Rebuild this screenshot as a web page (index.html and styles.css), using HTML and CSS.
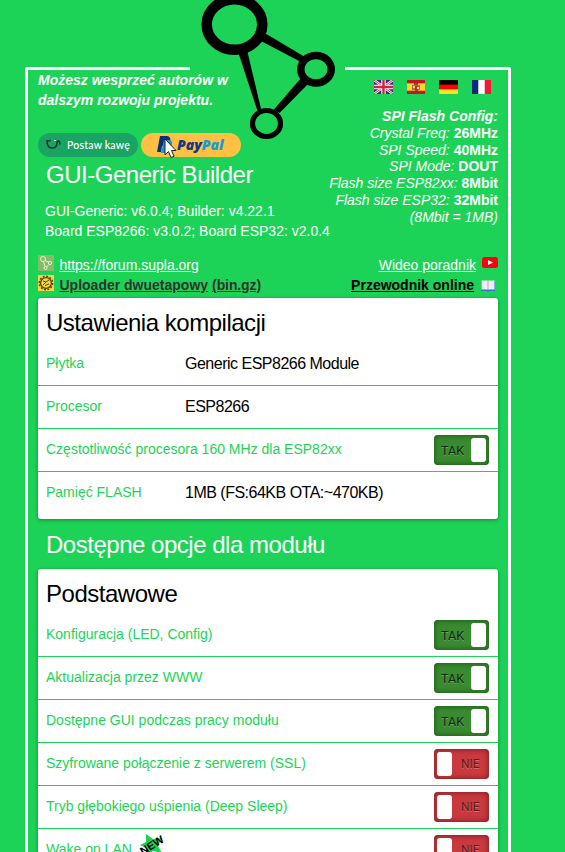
FILE: index.html
```html
<!DOCTYPE html>
<html lang="pl">
<head>
<meta charset="utf-8">
<title>GUI-Generic Builder</title>
<link rel="stylesheet" href="styles.css">
</head>
<body>
<main class="frame">
  <svg class="logo" viewBox="190 0 155 150" width="155" height="150">
    <rect class="logo-gap" x="190" y="60" width="155" height="14"/>
    <path d="M237.500 50 L247 50 L261.500 111 L257.500 111 Z"/>
    <path d="M261 41 L265.500 33.500 L305 57 L299 61 Z"/>
    <path d="M301 78 L308 84 L279.500 113 L273.500 110 Z"/>
    <ellipse cx="234.500" cy="24.500" rx="27.800" ry="25.300" class="ring ring-l"/>
    <ellipse cx="316" cy="69.300" rx="15.200" ry="13.800" class="ring ring-m"/>
    <ellipse cx="266.500" cy="123.500" rx="14" ry="13" class="ring ring-s"/>
  </svg>
  <header class="head">
    <div class="intro">
      <p class="support">Możesz wesprzeć autorów w<br>dalszym rozwoju projektu.</p>
      <div class="donate">
        <span class="pill coffee">
          <svg width="16" height="12" viewBox="0 0 16 12"><path d="M4 1.800 H1 C1 7 3 9 6 9 S11 7 11 4 C11.500 1 14 1.500 13.800 5" fill="none" stroke="#17382c" stroke-width="1.600" stroke-linecap="round"/><path d="M8 1.500h2" stroke="#fff"/></svg>
          <span>Postaw kawę</span>
        </span>
        <span class="pill paypal">
          <svg width="17" height="18" viewBox="0 0 17 18"><path d="M3 0 H10 C15 0 15 10 8 10 H5 L4 16 H0 Z" fill="#0b2f78"/><path d="M7 4 H13 C17 5 15 12 10 12 L8 17 H4 Z" fill="#1698d8"/></svg>
          <span class="pp"><b>Pay</b><i>Pal</i></span>
          <svg class="cursor" width="13" height="21" viewBox="0 0 13 21"><path d="M1 1 V17 L4.500 13.500 L7 19.500 L10 18.300 L7.500 12.500 H12 Z" fill="#fff" stroke="#222"/></svg>
        </span>
      </div>
      <h1>GUI-Generic Builder</h1>
      <p class="versions">GUI-Generic: v6.0.4; Builder: v4.22.1<br>Board ESP8266: v3.0.2; Board ESP32: v2.0.4</p>
    </div>
    <div class="side">
      <div class="flags">
        <svg width="19" height="14" viewBox="0 0 19 14"><path fill="#26337f" d="M0 0h19v14H0z"/><path d="M0 0L19 14M19 0L0 14" stroke="#fff" stroke-width="2.400"/><path d="M0 0L19 14M19 0L0 14" stroke="#d4213d" stroke-width="1"/><path d="M9.500 0V14M0 7H19" stroke="#fff" stroke-width="4.400"/><path d="M9.500 0V14M0 7H19" stroke="#d4213d" stroke-width="2.400"/></svg>
        <svg width="18" height="14" viewBox="0 0 18 14"><path fill="#c8141e" d="M0 0h18v14H0z"/><path fill="#ffd52b" d="M0 3.300h18v7.400H0z"/><path fill="#b96a50" d="M5 5h8v5H5z"/><path fill="#a63a2c" d="M7 3h4v2H7zM8 6h3v5H8z"/><path fill="#ddd0b4" d="M6 6h2v2H6zM10 7h2v2h-2z"/></svg>
        <svg width="19" height="14" viewBox="0 0 19 14"><path d="M0 0h19v5H0z"/><path fill="#f00" d="M0 4.600h19v5H0z"/><path fill="#ffdf20" d="M0 9.400h19v4.600H0z"/></svg>
        <svg width="19" height="14" viewBox="0 0 19 14"><path fill="#fff" d="M0 0h19v14H0z"/><path fill="#092b7c" d="M0 0h6.300v14H0z"/><path fill="#f31835" d="M12.700 0H19v14h-6.300z"/></svg>
      </div>
      <div class="spi">
        <b>SPI Flash Config:</b><br>
        Crystal Freq: <strong>26MHz</strong><br>
        SPI Speed: <strong>40MHz</strong><br>
        SPI Mode: <strong>DOUT</strong><br>
        Flash size ESP82xx: <strong>8Mbit</strong><br>
        Flash size ESP32: <strong>32Mbit</strong><br>
        (8Mbit = 1MB)
      </div>
    </div>
  </header>
  <nav class="links">
    <div class="line">
      <svg width="16" height="16" viewBox="0 0 16 16"><path fill="#83bd67" d="M0 0h16v16H0z"/><g fill="none" stroke="#e2f3da"><circle cx="5" cy="4" r="2.500"/><circle cx="12" cy="8" r="1.600"/><circle cx="7.500" cy="13" r="1.500"/><path d="M7 5.500l4 2M5.500 6.500l1.500 5M11 9.500l-2.500 2.500"/></g></svg>
      <a class="forum">https://forum.supla.org</a>
      <a class="right">Wideo poradnik</a>
      <svg class="yt" width="16" height="11" viewBox="0 0 16 11"><rect width="16" height="11" rx="2.500" fill="#f01"/><path d="M6 3l5 2.500L6 8z" fill="#fff"/></svg>
    </div>
    <div class="line">
      <svg width="16" height="16" viewBox="0 0 16 16"><path fill="#fcd63a" d="M0 0h16v16H0z"/><g fill="none" stroke="#514414"><circle cx="8" cy="8" r="6.700" stroke-width="1.400" stroke-dasharray="2 1.500"/><circle cx="8" cy="8" r="5.400" stroke-width="1.300"/><path d="M5 6l3 1 3-2M5 10l3-3M7 10.500l4-1.500"/></g></svg>
      <a class="uploader">Uploader dwuetapowy</a><a class="bin">(bin.gz)</a>
      <a class="right guide">Przewodnik online</a>
      <svg class="book" width="14" height="12" viewBox="0 0 14 12"><path fill="#2878cc" d="M0 2h14v9H8l-1 1-1-1H0z"/><path fill="#f3edf7" d="M.500 .500h6l.500.500.500-.500h6v9H.500z"/><path stroke="#b7abc6" d="M7 1v9"/></svg>
    </div>
  </nav>
  <section class="card settings">
    <h2>Ustawienia kompilacji</h2>
    <div class="row"><span class="label">Płytka</span><span class="value">Generic ESP8266 Module</span></div>
    <div class="row"><span class="label">Procesor</span><span class="value">ESP8266</span></div>
    <div class="row"><span class="label wide">Częstotliwość procesora 160 MHz dla ESP82xx</span><span class="toggle on">TAK</span></div>
    <div class="row"><span class="label">Pamięć FLASH</span><span class="value">1MB (FS:64KB OTA:~470KB)</span></div>
  </section>
  <h2 class="options">Dostępne opcje dla modułu</h2>
  <section class="card">
    <h2>Podstawowe</h2>
    <div class="row"><span class="label wide">Konfiguracja (LED, Config)</span><span class="toggle on">TAK</span></div>
    <div class="row"><span class="label wide">Aktualizacja przez WWW</span><span class="toggle on">TAK</span></div>
    <div class="row"><span class="label wide">Dostępne GUI podczas pracy modułu</span><span class="toggle on">TAK</span></div>
    <div class="row"><span class="label wide">Szyfrowane połączenie z serwerem (SSL)</span><span class="toggle">NIE</span></div>
    <div class="row"><span class="label wide">Tryb głębokiego uśpienia (Deep Sleep)</span><span class="toggle">NIE</span></div>
    <div class="row"><span class="label wide">Wake on LAN</span>
      <span class="new"><svg width="26" height="24" viewBox="0 0 26 24"><path fill="#1dd357" d="M7 0l7 5 9-1-4 8 4 7-9-2-7 6V14L1 11l6-3z"/></svg><b>NEW</b></span>
      <span class="toggle">NIE</span></div>
  </section>
</main>
</body>
</html>
```
FILE: styles.css
```css
* { box-sizing: border-box; }
html, body { height: 100%; overflow: hidden; }
body {
  margin: 0;
  background: #1dd357;
  font: 14px/20px "Liberation Sans", Arial, sans-serif;
  color: #fff;
}
h1, h2, p { margin: 0; font-weight: 400; }
h1, h2 { font-size: 24px; line-height: 30px; letter-spacing: -.48px; }
svg { display: block; flex: none; }
.frame {
  position: relative;
  width: 486px;
  height: 785px;
  margin: 67px 0 0 25px;
  border: 3px solid #fff;
  border-bottom: 0;
  border-radius: 3px 3px 0 0;
  padding: 0 10px;
}
.logo { position: absolute; left: 162px; top: -70px; }
.logo-gap { fill: #1dd357; }
.ring { fill: #1dd357; stroke: #000; }
.ring-l { stroke-width: 10.500px; }
.ring-m { stroke-width: 7.500px; }
.ring-s { stroke-width: 5.200px; }
.head { display: flex; justify-content: space-between; height: 184px; }
.intro { width: 300px; white-space: nowrap; position: relative; }
.support { font-weight: bold; font-style: italic; }
.donate { display: flex; gap: 3px; margin-top: 23px; }
.pill {
  position: relative;
  display: flex;
  align-items: center;
  width: 100px;
  height: 24px;
  border-radius: 12px;
}
.coffee { background: #19a463; padding-left: 8px; gap: 5px; font: 500 10.500px/24px Lato, sans-serif; letter-spacing: .2px; }
.paypal { background: #ffc043; padding-left: 16px; gap: 3px; }
.pp { font: italic 800 14px/24px "Open Sans", sans-serif; color: #113984; }
.pp b { font-weight: 800; }
.pp i { color: #179bd7; }
.cursor { position: absolute; left: 23px; top: 5px; }
h1 { margin: 3px 0 0 8px; }
.versions { margin: 11px 0 0 7px; }
.side { width: 180px; margin-left: -20px; }
.flags { display: flex; justify-content: flex-end; gap: 14px; padding: 10px 7px 0 0; height: 38px; }
.spi { text-align: right; white-space: nowrap; font-style: italic; line-height: 16.800px; }
.spi strong { font-style: normal; }
.links { height: 44px; }
.line { display: flex; height: 20px; align-items: flex-start; padding-top: 1px; }
.line a { text-decoration: underline; margin-left: 5.500px; }
.line .bin { margin-left: 4px; letter-spacing: -.1px; }
.line .right { margin-left: auto; }
.uploader, .bin { color: #2f342f; font-weight: bold; }
.guide { color: #000; font-weight: bold; }
.yt { margin: 2px 0 0 6px; }
.book { margin: 5px 3px 0 7px; }
.card {
  background: #fff;
  border-radius: 3px;
  box-shadow: 0 1px 4px rgba(0, 0, 0, .35);
  padding-top: 10px;
  color: #1dd357;
}
.settings { height: 221px; }
.card h2 { color: #000; padding-left: 8px; height: 35px; }
.row {
  display: flex;
  align-items: center;
  height: 43px;
  padding: 0 9px 0 8px;
  border-bottom: 1px solid #1dd357;
}
.row:last-child { border-bottom-color: transparent; }
.label { width: 139px; padding-bottom: 2px; }
.label.wide { width: auto; }
.value { color: #000; font-size: 16px; letter-spacing: -.5px; }
.options { margin: 11px 0 9px 8px; }
.toggle {
  position: relative;
  margin-left: auto;
  width: 55px;
  height: 30px;
  border-radius: 4px;
  background: #c9393e;
  box-shadow: inset 0 0 5px 1px #862025;
  color: #601b1e;
  font: 12px/31px Roboto, sans-serif;
  text-shadow: 0 1px rgba(255, 255, 255, .25);
  padding-left: 27px;
}
.toggle::after {
  content: "";
  position: absolute;
  left: 3px;
  top: 3px;
  width: 15px;
  height: 24px;
  background: #fff;
  border-radius: 3px;
}
.toggle.on { background: #3a8a30; box-shadow: inset 0 0 5px 1px #215f1b; color: #10260e; padding-left: 7px; font-size: 12.500px; }
.toggle.on::after { left: 37px; }
.new { position: relative; margin: -8px 0 0 7px; }
.new b { position: absolute; left: 0; top: 3px; color: #000; font-size: 11px; line-height: 16px; transform: rotate(-32deg); }
```
